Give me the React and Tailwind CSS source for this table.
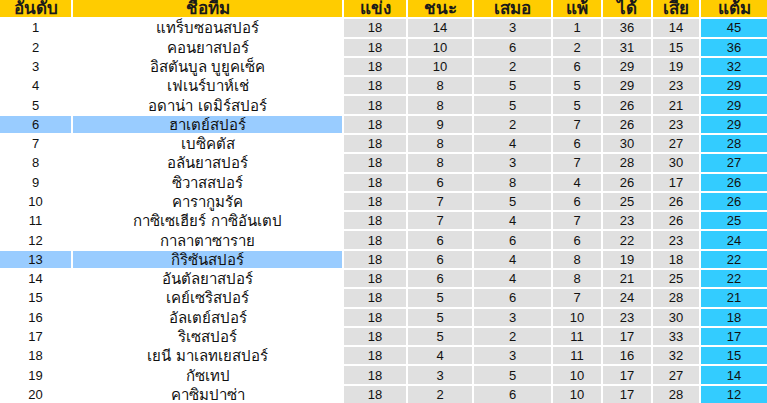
import React from 'react';

const rows = [
  [1, 'แทร็บซอนสปอร์', 18, 14, 3, 1, 36, 14, 45],
  [2, 'คอนยาสปอร์', 18, 10, 6, 2, 31, 15, 36],
  [3, 'อิสตันบูล บูยูคเซ็ค', 18, 10, 2, 6, 29, 19, 32],
  [4, 'เฟเนร์บาห์เช่', 18, 8, 5, 5, 29, 23, 29],
  [5, 'อดาน่า เดมิร์สปอร์', 18, 8, 5, 5, 26, 21, 29],
  [6, 'ฮาเตย์สปอร์', 18, 9, 2, 7, 26, 23, 29],
  [7, 'เบซิคตัส', 18, 8, 4, 6, 30, 27, 28],
  [8, 'อลันยาสปอร์', 18, 8, 3, 7, 28, 30, 27],
  [9, 'ซิวาสสปอร์', 18, 6, 8, 4, 26, 17, 26],
  [10, 'คารากูมรัค', 18, 7, 5, 6, 25, 26, 26],
  [11, 'กาซิเซเฮียร์ กาซิอันเตป', 18, 7, 4, 7, 23, 26, 25],
  [12, 'กาลาตาซาราย', 18, 6, 6, 6, 22, 23, 24],
  [13, 'กิริซันสปอร์', 18, 6, 4, 8, 19, 18, 22],
  [14, 'อันตัลยาสปอร์', 18, 6, 4, 8, 21, 25, 22],
  [15, 'เคย์เซริสปอร์', 18, 5, 6, 7, 24, 28, 21],
  [16, 'อัลเตย์สปอร์', 18, 5, 3, 10, 23, 30, 18],
  [17, 'ริเซสปอร์', 18, 5, 2, 11, 17, 33, 17],
  [18, 'เยนี มาเลทเยสปอร์', 18, 4, 3, 11, 16, 32, 15],
  [19, 'กัซเทป', 18, 3, 5, 10, 17, 27, 14],
  [20, 'คาซิมปาซ่า', 18, 2, 6, 10, 17, 28, 12],
];

const headers = ['อันดับ', 'ชื่อทีม', 'แข่ง', 'ชนะ', 'เสมอ', 'แพ้', 'ได้', 'เสีย', 'แต้ม'];
const highlighted = [6, 13];

const App = () => {
  return (
    <div
      className="grid w-[767px] h-[403px] gap-[2px] bg-white text-[13px] leading-none text-[#111]"
      style={{
        gridTemplateColumns: '71px 269px 62px 64px 77px 48px 48px 46px 66px',
        gridTemplateRows: 'repeat(21, 1fr)',
        fontFamily: '"Liberation Sans", "DejaVu Sans", sans-serif',
      }}
    >
      {headers.map((h) => (
        <div key={h} className="flex items-center justify-center bg-[#ffcc00] font-bold text-[17px] text-[#1a1a1a]">
          {h}
        </div>
      ))}
      {rows.map((r) => {
        const hl = highlighted.includes(r[0]);
        return r.map((v, i) => {
          let bg = 'bg-[#e0e0e0]';
          if (i < 2) bg = hl ? 'bg-[#99ccff]' : 'bg-white';
          if (i === 8) bg = 'bg-[#33ccff]';
          return (
            <div
              key={`${r[0]}-${i}`}
              className={`flex items-center justify-center ${bg} ${i === 1 ? 'text-[15px]' : ''}`}
            >
              {v}
            </div>
          );
        });
      })}
    </div>
  );
};

export default App;
